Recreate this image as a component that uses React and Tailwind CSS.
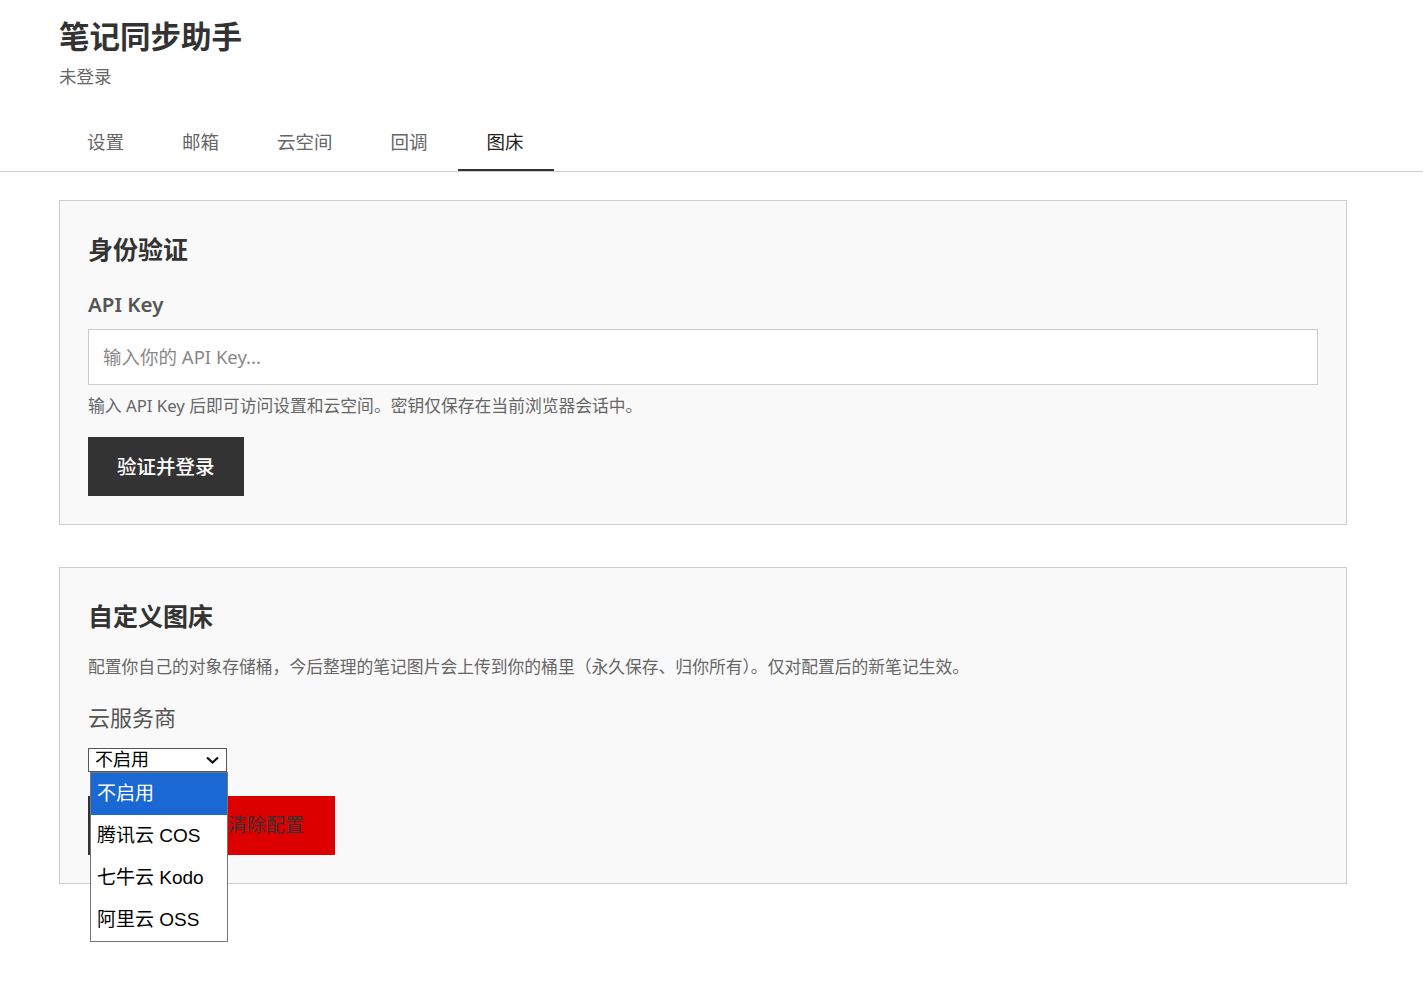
import React from "react";

const tabs = ["设置", "邮箱", "云空间", "回调", "图床"];

export default function App() {
  return (
    <div
      className="min-h-[984px] bg-white text-[#333]"
      style={{ fontFamily: '"Noto Sans", "Noto Sans CJK SC", sans-serif' }}
    >
      <header className="px-[59px] pt-[14px]">
        <h1 className="text-[30.5px] font-bold leading-[44px] text-[#333]">笔记同步助手</h1>
        <p className="mt-[6px] text-[17.5px] leading-[24px] text-[#666]">未登录</p>
      </header>

      <nav className="mt-[31px] flex gap-[2px] border-b border-[#ccc] px-[59px]">
        {tabs.map((t, i) => (
          <div
            key={t}
            className={
              "pb-[14px] pt-[10px] text-[18.5px] leading-[26px] " +
              (i === 4
                ? "border-b-[2px] border-[#333] pl-[29px] pr-[30px] text-[#222]"
                : "border-b-[2px] border-transparent px-[28px] text-[#666]")
            }
          >
            {t}
          </div>
        ))}
      </nav>

      <main className="box-content flex w-[1288px] flex-col gap-[42px] pl-[59px] pt-[28px]">
        <section className="border border-[#ccc] bg-[#f9f9f9] px-[28px] pb-[28px] pt-[28px]">
          <h2 className="text-[25px] font-bold leading-[40px] text-[#333]">身份验证</h2>
          <label className="mt-[20px] block text-[20.5px] font-semibold leading-[30px] text-[#555]">API Key</label>
          <div className="mt-[10px] flex h-[56px] items-center border border-[#ccc] bg-white px-[14px] text-[18.5px] text-[#888]">
            输入你的 API Key...
          </div>
          <p className="mt-[10px] text-[16.8px] leading-[22px] text-[#666]">
            输入 API Key 后即可访问设置和云空间。密钥仅保存在当前浏览器会话中。
          </p>
          <button className="mt-[20px] h-[59px] bg-[#333] px-[29px] text-[19.5px] font-medium text-white">
            验证并登录
          </button>
        </section>

        <section className="relative border border-[#ccc] bg-[#f9f9f9] px-[28px] pb-[28px] pt-[28px]">
          <h2 className="text-[25px] font-bold leading-[40px] text-[#333]">自定义图床</h2>
          <p className="mt-[19px] text-[16.8px] leading-[24px] text-[#666]">
            配置你自己的对象存储桶，今后整理的笔记图片会上传到你的桶里（永久保存、归你所有）。仅对配置后的新笔记生效。
          </p>
          <label className="mt-[22px] block text-[22px] leading-[32px] text-[#555]">云服务商</label>
          <div
            className="mt-[15px] flex h-[24px] w-[139px] items-center justify-between border border-[#555] bg-white pl-[6px] pr-[6px] text-[18px] leading-[22px] text-black"
            style={{ fontFamily: '"Liberation Sans", "Noto Sans CJK SC", sans-serif' }}
          >
            <span>不启用</span>
            <svg width="15" height="10" viewBox="0 0 15 10" fill="none">
              <path d="M2 2.5 L7.5 7.5 L13 2.5" stroke="#111" strokeWidth="2.2" />
            </svg>
          </div>
          <div className="mt-[24px] flex gap-[17px]">
            <button className="h-[59px] bg-[#333] px-[29px] text-[19px] text-white">保存</button>
            <button className="h-[59px] bg-[#dd0000] pl-[27px] pr-[31px] text-[19px] text-[#333]">清除配置</button>
          </div>

          <div
            className="absolute left-[30px] top-[204px] z-10 w-[138px] border border-[#767676] bg-white text-[19px] text-black"
            style={{ fontFamily: '"Liberation Sans", "Noto Sans CJK SC", sans-serif' }}
          >
            <div className="flex h-[42px] items-center bg-[#1a68d4] px-[6px] text-white">不启用</div>
            <div className="flex h-[42px] items-center px-[6px]">腾讯云 COS</div>
            <div className="flex h-[42px] items-center px-[6px]">七牛云 Kodo</div>
            <div className="flex h-[42px] items-center px-[6px]">阿里云 OSS</div>
          </div>
        </section>
      </main>
    </div>
  );
}
